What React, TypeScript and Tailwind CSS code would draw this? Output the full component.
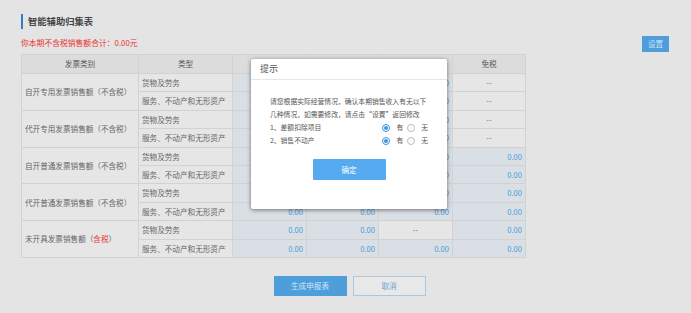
import React from "react";

type Row = {
  cat: React.ReactNode;
  type: string;
  vals: (string | null)[];
  first: boolean;
};

const FONT = { fontFamily: '"Noto Sans CJK SC", "Noto Sans", sans-serif' };

const groups: { cat: React.ReactNode; vals: (string | null)[][] }[] = [
  { cat: "自开专用发票销售额（不含税）", vals: [["0.00", "0.00", "0.00", "--"], ["0.00", "0.00", "0.00", "--"]] },
  { cat: "代开专用发票销售额（不含税）", vals: [["0.00", "0.00", "0.00", "--"], ["0.00", "0.00", "0.00", "--"]] },
  { cat: "自开普通发票销售额（不含税）", vals: [["0.00", "0.00", "0.00", "0.00"], ["0.00", "0.00", "0.00", "0.00"]] },
  { cat: "代开普通发票销售额（不含税）", vals: [["0.00", "0.00", "0.00", "0.00"], ["0.00", "0.00", "0.00", "0.00"]] },
  {
    cat: (
      <>
        未开具发票销售额（<span className="text-[#e8332f]">含税</span>）
      </>
    ),
    vals: [["0.00", "0.00", "--", "0.00"], ["0.00", "0.00", "0.00", "0.00"]],
  },
];

function ValueCell({ v }: { v: string | null }) {
  if (v === "--") {
    return (
      <td className="border border-[#d2d2d2] bg-[#e6e6e6] text-center text-[#777]">--</td>
    );
  }
  return (
    <td className="border border-[#d2d2d2] bg-[#dadfe6] pr-[3px] text-right text-[#4a9ed6]">{v}</td>
  );
}

function Radio({ on }: { on: boolean }) {
  return (
    <span
      className={
        "inline-flex h-[8px] w-[8px] items-center justify-center rounded-full border " +
        (on ? "border-[#3d95dd]" : "border-[#bbb]")
      }
    >
      {on && <span className="h-[4px] w-[4px] rounded-full bg-[#3d95dd]" />}
    </span>
  );
}

function Option({ label }: { label: string }) {
  return (
    <div className="flex h-[13px] items-center">
      <span className="flex-1">{label}</span>
      <Radio on />
      <span className="ml-[6px] mr-[4px]">有</span>
      <Radio on={false} />
      <span className="ml-[6px]">无</span>
    </div>
  );
}

export default function App() {
  const rows: Row[] = [];
  groups.forEach((g) => {
    rows.push({ cat: g.cat, type: "货物及劳务", vals: g.vals[0], first: true });
    rows.push({ cat: g.cat, type: "服务、不动产和无形资产", vals: g.vals[1], first: false });
  });

  return (
    <div className="relative h-[313px] w-[691px] overflow-hidden bg-[#e4e4e4] text-[#555]" style={FONT}>
      <div className="px-[21px] pt-[14px]">
        <div className="flex h-[15px] items-center">
          <span className="h-[15px] w-[2px] bg-[#2f7fd0]" />
          <span className="ml-[5px] text-[9.3px] font-bold text-[#444]">智能辅助归集表</span>
        </div>
        <div className="mt-[6px] flex h-[16px] items-center justify-between">
          <span className="text-[7.8px] text-[#e8332f]">你本期不含税销售额合计：0.00元</span>
          <button className="mr-[1px] mt-[2px] h-[16px] w-[27px] bg-[#4d9edb] text-[7.5px] text-[#cfe4f6]">设置</button>
        </div>

        <table className="mt-[3px] table-fixed border-collapse text-[7.6px]" style={{ width: 504 }}>
          <colgroup>
            <col style={{ width: 117 }} />
            <col style={{ width: 94 }} />
            <col style={{ width: 74 }} />
            <col style={{ width: 72 }} />
            <col style={{ width: 74 }} />
            <col style={{ width: 73 }} />
          </colgroup>
          <thead>
            <tr className="h-[19px] bg-[#dcdcdc] text-[#555]">
              <th className="border border-[#d2d2d2] font-normal">发票类别</th>
              <th className="border border-[#d2d2d2] font-normal">类型</th>
              <th className="border border-[#d2d2d2] font-normal"></th>
              <th className="border border-[#d2d2d2] font-normal"></th>
              <th className="border border-[#d2d2d2] font-normal"></th>
              <th className="border border-[#d2d2d2] font-normal">免税</th>
            </tr>
          </thead>
          <tbody>
            {rows.map((r, i) => (
              <tr key={i} className="h-[18.4px]">
                {r.first && (
                  <td rowSpan={2} className="border border-[#d2d2d2] bg-[#e6e6e6] pl-[3px] text-[#666]">
                    {r.cat}
                  </td>
                )}
                <td className="border border-[#d2d2d2] bg-[#e6e6e6] pl-[3px] text-[#666]">{r.type}</td>
                {r.vals.map((v, j) => (
                  <ValueCell key={j} v={v} />
                ))}
              </tr>
            ))}
          </tbody>
        </table>

        <div className="mt-[18px] flex justify-center gap-[6px] pl-[8px]">
          <button className="h-[20px] w-[73px] bg-[#4d9edb] text-[7.6px] text-[#d3e6f6]">生成申报表</button>
          <button className="h-[20px] w-[73px] border border-[#a7c8e6] bg-[#e8e8e8] text-[7.6px] text-[#6aa4d6]">取消</button>
        </div>
      </div>

      <div className="absolute left-[251px] top-[59px] w-[196px] rounded-[2px] bg-white shadow-[0_1px_4px_rgba(0,0,0,0.5)]">
        <div className="flex h-[21px] items-center border-b border-[#e6e6e6] pl-[9px] text-[9px] text-[#555]">提示</div>
        <div className="px-[19px] pt-[15px] text-[6.8px] text-[#555]">
          <div className="leading-[13px]">请您根据实际经营情况，确认本期销售收入有无以下</div>
          <div className="leading-[13px]">几种情况，如需要修改，请点击“设置”返回修改</div>
          <Option label="1、差额扣除项目" />
          <Option label="2、销售不动产" />
          <div className="mt-[12px] flex justify-center pb-[29px]">
            <button className="h-[21px] w-[73px] rounded-[1px] bg-[#56aaf0] text-[7.6px] text-white">确定</button>
          </div>
        </div>
      </div>
    </div>
  );
}
